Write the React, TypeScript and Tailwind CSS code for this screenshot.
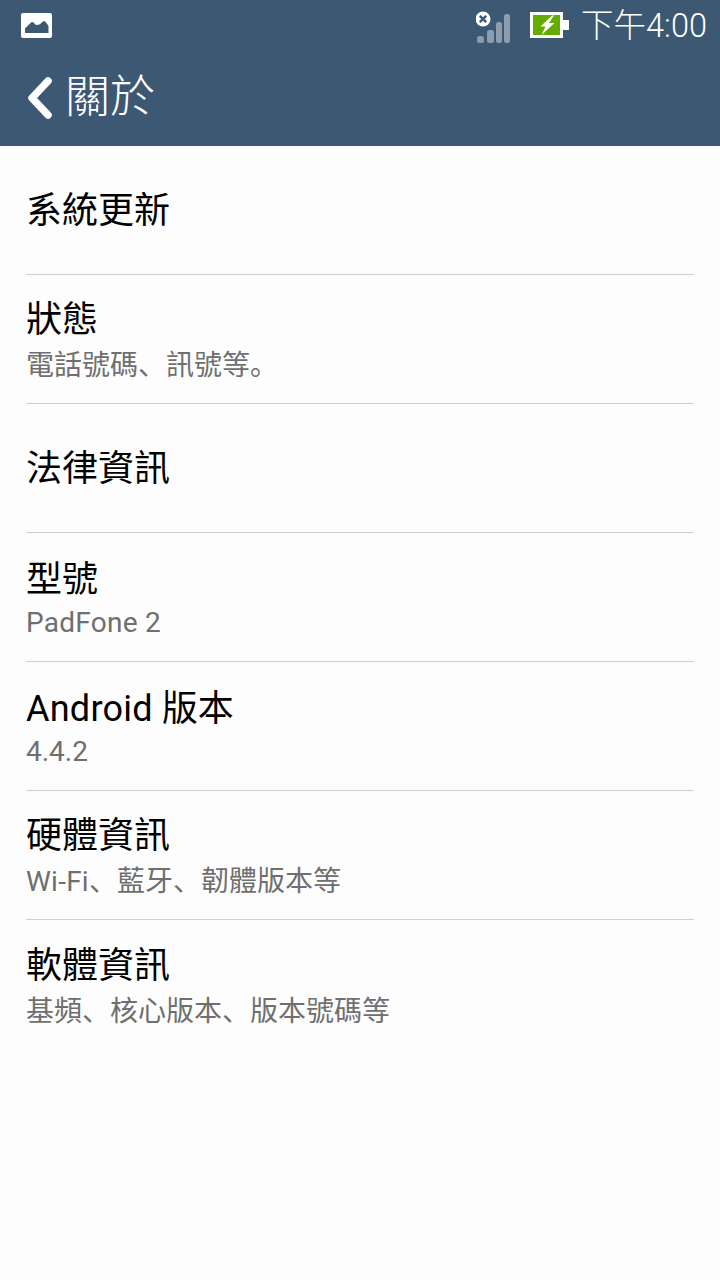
import type { ReactNode } from 'react';

const cjk = "font-['Roboto','Noto_Sans_CJK_TC',sans-serif]";

function P({ children }: { children: ReactNode }) {
  return <span className="font-['Noto_Sans_CJK_SC',sans-serif]">{children}</span>;
}

function L({ children }: { children: ReactNode }) {
  return <span className="tracking-[0.25px]">{children}</span>;
}

function Row({ title, sub, last }: { title: ReactNode; sub?: ReactNode; last?: boolean }) {
  return (
    <div className={`mx-[26px] h-[129px] flex flex-col justify-center ${sub ? 'pt-[3px]' : 'pt-[2px]'} ${last ? '' : 'border-b border-[#d0d0d0]'}`}>
      <div className="text-[36px] leading-[44px] text-black">{title}</div>
      {sub && <div className="text-[28px] leading-[34px] text-[#6f6f6f] mt-[4px]">{sub}</div>}
    </div>
  );
}

export default function App() {
  return (
    <div className={`w-[720px] h-[1280px] bg-[#fdfdfd] overflow-hidden ${cjk}`}>
      <div className="h-[146px] bg-[#3d5873] flex flex-col">
        <div className="h-[50px] flex items-center pl-[21px] pr-[13px]">
          <svg width="31" height="25" viewBox="0 0 31 25">
            <rect width="31" height="25" rx="2" fill="#fff" />
            <path d="M4 20 V15.5 L10 9.5 C11 8.5 12 9 13 10 L15 12 L18.5 11.5 L22 8.5 C23 8 24 8 25 9.5 L27.5 13 V20 Z" fill="#3d5873" />
          </svg>
          <div className="ml-auto flex items-center">
            <svg width="36" height="36" viewBox="0 0 36 36">
              <rect x="1" y="29" width="7" height="7" rx="2.5" fill="#8d9cac" />
              <rect x="11" y="23" width="7" height="13" rx="2.5" fill="#8d9cac" />
              <rect x="20" y="15" width="6" height="21" rx="2.5" fill="#8d9cac" />
              <rect x="28" y="7" width="6" height="29" rx="2.5" fill="#8d9cac" />
              <circle cx="7" cy="12" r="7.5" fill="#fff" />
              <path d="M3.8 8.8 L10.2 15.2 M10.2 8.8 L3.8 15.2" stroke="#3d5873" strokeWidth="2.4" />
            </svg>
            <svg className="ml-[18px]" width="39" height="26" viewBox="0 0 39 26">
              <path d="M0 0 H33 V8 H39 V18 H33 V26 H0 Z" fill="#fff" />
              <rect x="3" y="3" width="27" height="20" fill="#62ad00" />
              <path d="M22 3.5 L10.5 14.5 H15.5 L11.5 23 L24.5 11 H19 L24 3.5 Z" fill="#fff" />
            </svg>
            <div className="ml-[12px] text-[32.5px] leading-[50px] pt-[1px] text-white font-light">下午4:00</div>
          </div>
        </div>
        <div className="h-[96px] flex items-center pl-[27px]">
          <svg width="26" height="42" viewBox="0 0 26 42" fill="none">
            <path d="M21 4 L5 21 L21 38" stroke="#fff" strokeWidth="7.5" strokeLinecap="round" strokeLinejoin="round" />
          </svg>
          <div className="ml-[12px] text-[45px] leading-[56px] text-white font-light">關於</div>
        </div>
      </div>
      <Row title="系統更新" />
      <Row title="狀態" sub={<>電話號碼<P>、</P>訊號等<P>。</P></>} />
      <Row title="法律資訊" />
      <Row title="型號" sub={<L>PadFone 2</L>} />
      <Row title={<><L>Android</L> 版本</>} sub="4.4.2" />
      <Row title="硬體資訊" sub={<><L>Wi-Fi</L><P>、</P>藍牙<P>、</P>韌體版本等</>} />
      <Row title="軟體資訊" sub={<>基頻<P>、</P>核心版本<P>、</P>版本號碼等</>} last />
    </div>
  );
}
